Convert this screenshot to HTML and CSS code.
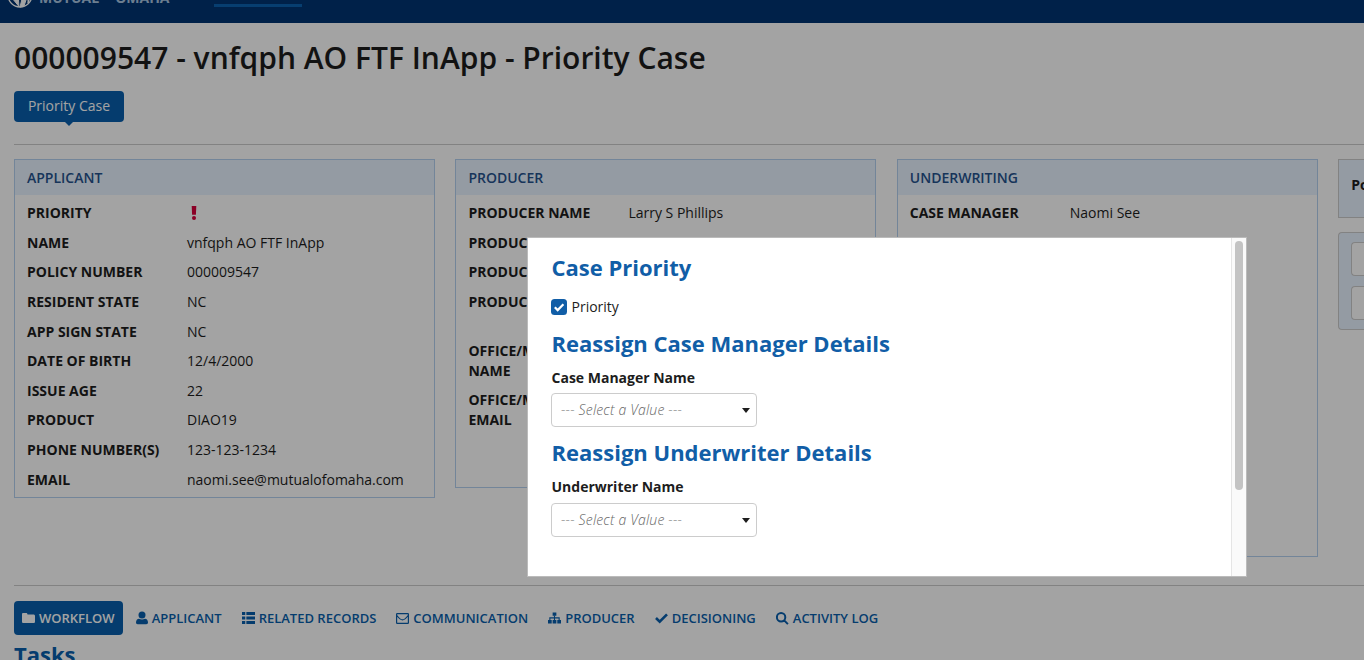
FILE: index.html
```html
<!DOCTYPE html>
<html lang="en">

<head>
    <meta charset="UTF-8">
    <meta name="viewport" content="width=device-width, initial-scale=1.0">
    <title>000009547 - Priority Case</title>
    <link rel="stylesheet" href="styles.css">
</head>

<body>
    <header class="topbar">
        <div class="brand">
            <svg class="brand-mark" width="26" height="26" viewBox="0 0 26 26">
                <circle cx="13" cy="13" r="12" fill="none" stroke="#fff" stroke-width="1.3"/>
                <path d="M5 16l7 8.500L11 13 8 12zM13 25l2-8 3-4 2 2-3 9zM21 14l3-1-3 8z" fill="#fff" stroke="#fff" stroke-width="1"/>
            </svg>
            <span class="brand-name">Mutual<small>of</small>Omaha</span>
        </div>
        <div class="active-tab"></div>
    </header>

    <main>
        <h1>000009547 - vnfqph AO FTF InApp - Priority Case</h1>
        <div class="milestone">Priority Case</div>

        <section class="summary">
            <article class="panel applicant">
                <h2>APPLICANT</h2>
                <dl>
                    <div><dt>PRIORITY</dt><dd><svg class="alert" width="14" height="14" viewBox="0 0 14 14"><path d="M4.700 0h4.600L8.900 8.800H5.100z"/><circle cx="7" cy="12" r="2"/></svg></dd></div>
                    <div><dt>NAME</dt><dd>vnfqph AO FTF InApp</dd></div>
                    <div><dt>POLICY NUMBER</dt><dd>000009547</dd></div>
                    <div><dt>RESIDENT STATE</dt><dd>NC</dd></div>
                    <div><dt>APP SIGN STATE</dt><dd>NC</dd></div>
                    <div><dt>DATE OF BIRTH</dt><dd>12/4/2000</dd></div>
                    <div><dt>ISSUE AGE</dt><dd>22</dd></div>
                    <div><dt>PRODUCT</dt><dd>DIAO19</dd></div>
                    <div><dt>PHONE NUMBER(S)</dt><dd>123-123-1234</dd></div>
                    <div><dt>EMAIL</dt><dd>naomi.see@mutualofomaha.com</dd></div>
                </dl>
            </article>

            <article class="panel producer">
                <h2>PRODUCER</h2>
                <dl>
                    <div><dt>PRODUCER NAME</dt><dd>Larry S Phillips</dd></div>
                    <div><dt>PRODUCER</dt></div>
                    <div><dt>PRODUCER</dt></div>
                    <div class="tall"><dt>PRODUCER</dt></div>
                    <div><dt>OFFICE/MGR<br>NAME</dt></div>
                    <div><dt>OFFICE/MGR<br>EMAIL</dt></div>
                </dl>
            </article>

            <article class="panel underwriting">
                <h2>UNDERWRITING</h2>
                <dl>
                    <div><dt>CASE MANAGER</dt><dd>Naomi See</dd></div>
                </dl>
            </article>

            <aside>
                <div class="policy-box">Po</div>
                <div class="action-box">
                    <div class="action"></div>
                    <div class="action"></div>
                </div>
            </aside>
        </section>

        <nav class="tabs">
            <a class="current"><svg width="13" height="12" viewBox="0 0 13 12"><path d="M0 2.2C0 1.5.5 1 1.2 1h3.1c.7 0 1.1.5 1.2 1.5h6c.8 0 1.5.6 1.5 1.4v5.8c0 .8-.6 1.3-1.4 1.3H1.4C.6 11 0 10.500 0 9.700z"/></svg>WORKFLOW</a>
            <a><svg width="12" height="14" viewBox="0 0 12 14"><circle cx="6" cy="4" r="3.500"/><path d="M0 11.500C0 9 1.300 7.700 3 7.700c1.900 1 4.100 1 6 0 1.700 0 3 1.300 3 3.800 0 1-.7 1.700-1.700 1.700H1.700C.7 13.200 0 12.500 0 11.500z"/></svg>APPLICANT</a>
            <a><svg width="13" height="12" viewBox="0 0 14 12" preserveAspectRatio="none"><path d="M0 0h3.500v3H0zM4.700 0H14v3H4.700zM0 4.500h3.500v3H0zM4.700 4.500H14v3H4.700zM0 9h3.500v3H0zM4.700 9H14v3H4.700z"/></svg>RELATED RECORDS</a>
            <a><svg width="13" height="11" viewBox="0 0 13 11"><path class="line" d="M1.200.6h10.600q.6 0 .6.600v8.600q0 .6-.6.600H1.200q-.6 0-.6-.6V1.200q0-.6.600-.6zM.8 2.500c1.600 2 4.400 4.400 5.700 4.400s4.100-2.400 5.700-4.400"/></svg>COMMUNICATION</a>
            <a><svg width="13" height="12" viewBox="0 0 14 12" preserveAspectRatio="none"><path d="M5 .5h4v3.300H5zM0 8h4v3.500H0zM5 8h4v3.500H5zM10 8h4v3.500h-4z"/><path class="line" d="M7 3.500V8M2 8V5.900h10V8"/></svg>PRODUCER</a>
            <a><svg width="13" height="12" viewBox="0 0 13 12"><path class="check" d="M1 6l3.700 3.700L12 2.300"/></svg>DECISIONING</a>
            <a><svg width="13" height="13" viewBox="0 0 13 13"><path class="lens" d="M9.300 5.300a4.200 4.200 0 1 1-8.400 0a4.200 4.200 0 1 1 8.400 0zM8.200 8.400l3.700 3.700"/></svg>ACTIVITY LOG</a>
        </nav>
        <h2 class="tasks">Tasks</h2>
    </main>

    <div class="overlay">
        <div class="dialog">
            <form>
                <h2>Case Priority</h2>
                <label class="priority">
                    <svg width="16" height="16" viewBox="0 0 16 16"><rect width="16" height="16" rx="3.500" fill="#115ea7"/><path d="M3.800 8.200l2.900 2.900 5.700-5.800" fill="none" stroke="#fff" stroke-width="2.200"/></svg>
                    Priority
                </label>
                <h2 class="manager-title">Reassign Case Manager Details</h2>
                <span class="field-label">Case Manager Name</span>
                <div class="select">--- Select a Value ---</div>
                <h2 class="underwriter-title">Reassign Underwriter Details</h2>
                <span class="field-label">Underwriter Name</span>
                <div class="select">--- Select a Value ---</div>
            </form>
            <div class="scrollbar"><div class="thumb"></div></div>
        </div>
    </div>
</body>

</html>
```
FILE: styles.css
```css
/* General Reset */
* {
    margin: 0;
    padding: 0;
    box-sizing: border-box;
}

body {
    height: 660px;
    overflow: hidden;
    font-family: "Open Sans", sans-serif;
    font-size: 14px;
    line-height: 1.4;
    color: #1d1d1d;
    background: #fff;
}

/* Top bar, scrolled mostly out of view */
.topbar {
    display: flex;
    height: 23px;
    overflow: hidden;
    background: #003472;
}

.brand {
    display: flex;
    align-items: flex-end;
    width: 207px;
    height: 8px;
    padding-left: 7px;
    color: #a9c6e2;
}

.brand-mark {
    flex: none;
}

.brand-name {
    margin: 0 0 0 6px;
    font-size: 14px;
    font-weight: 700;
    line-height: 20px;
    text-transform: uppercase;
}

.brand-name small {
    margin: 0 4px;
    font-size: 6px;
    vertical-align: 4px;
}

.active-tab {
    width: 88px;
    height: 3px;
    margin: 4px 0 0 7px;
    background: #0b62b0;
}

main {
    height: 637px;
    overflow: hidden;
    padding: 14px 0 0 14px;
}

h1 {
    height: 42px;
    font-size: 30px;
    font-weight: 600;
    line-height: 42px;
}

.milestone {
    position: relative;
    width: 110px;
    height: 31px;
    margin-top: 12px;
    border-radius: 4px;
    background: #085fad;
    color: #fff;
    line-height: 30px;
    text-align: center;
}

.milestone::after {
    content: "";
    position: absolute;
    top: 31px;
    left: 51px;
    border: 4px solid transparent;
    border-top-color: #085fad;
    border-bottom: 0;
}

/* Case summary */
.summary {
    display: flex;
    align-items: flex-start;
    gap: 20.4px;
    height: 442px;
    margin-top: 22px;
    padding-top: 14px;
    border-top: 1px solid #ccc;
    border-bottom: 1px solid #ccc;
}

.panel {
    flex: none;
    width: 421px;
    border: 1px solid #b5d1f0;
}

.applicant {
    height: 339px;
}

.producer {
    height: 329px;
}

.underwriting {
    height: 398px;
}

.panel h2 {
    height: 35px;
    padding-left: 12px;
    background: #e8f2ff;
    color: #25528e;
    font-size: 14px;
    font-weight: 600;
    line-height: 36px;
}

.panel dl {
    padding: 3.3px 12px 0;
}

.panel dl div {
    display: flex;
    padding: 5px 0;
}

.panel dl .tall {
    height: 49.2px;
}

dt {
    width: 160px;
    font-weight: 700;
}

.alert {
    display: block;
    margin-top: 3px;
    fill: #d9003c;
}

aside {
    flex: 1;
    font-weight: 700;
}

.policy-box {
    height: 59px;
    padding-left: 12px;
    border: 1px solid #ccc;
    border-right: 0;
    background: #e8f2ff;
    line-height: 50px;
    white-space: nowrap;
    overflow: hidden;
}

.action-box {
    display: flex;
    flex-direction: column;
    gap: 10px;
    height: 98px;
    margin-top: 14px;
    padding: 9px 0 9px 12px;
    border: 1px solid #ccc;
    border-right: 0;
    border-radius: 4px 0 0 4px;
    background: #e8f2ff;
}

.action {
    height: 34px;
    border: 1px solid #ccc;
    border-right: 0;
    border-radius: 4px 0 0 4px;
    background: #fff;
}

/* Tabs */
.tabs {
    display: flex;
    margin-top: 15px;
    color: #085fad;
    font-size: 13px;
    font-weight: 600;
}

.tabs a {
    display: flex;
    align-items: center;
    gap: 4px;
    height: 34px;
    margin-right: 4px;
    padding: 0 8px;
}

.tabs .current {
    margin-right: 5px;
    border-radius: 4px;
    background: #085fad;
    color: #fff;
}

.tabs svg {
    fill: currentColor;
}

.tabs .line,
.tabs .check,
.tabs .lens {
    fill: none;
    stroke: currentColor;
    stroke-width: 1.2;
}

.tabs .check {
    stroke-width: 2.6;
}

.tabs .lens {
    stroke-width: 2;
}

.tasks {
    margin-top: 4px;
    color: #085fad;
    font-size: 22px;
    line-height: 31px;
}

/* Dialog */
.overlay {
    position: absolute;
    top: 0;
    left: 0;
    width: 100%;
    height: 660px;
    padding: 237px 0 0 527px;
    background: rgba(0, 0, 0, 0.36);
}

.dialog {
    display: flex;
    justify-content: space-between;
    width: 720px;
    height: 340px;
    border: 1px solid #bbb;
    background: #fff;
}

form {
    padding: 14px 0 0 23px;
}

form h2 {
    padding-left: 0.5px;
    color: #115ea7;
    font-size: 22px;
    line-height: 31px;
}

.priority {
    display: flex;
    align-items: center;
    gap: 4.5px;
    height: 20px;
    margin-top: 14px;
}

.manager-title {
    margin-top: 11px;
}

.underwriter-title {
    margin-top: 10px;
}

.field-label {
    display: block;
    height: 20px;
    margin-top: 9px;
    padding-left: 0.5px;
    font-weight: 700;
}

.select {
    display: flex;
    align-items: center;
    justify-content: space-between;
    width: 206px;
    height: 34px;
    margin-top: 5px;
    padding: 0 6px 0 9px;
    border: 1px solid #ccc;
    border-radius: 4px;
    color: #666;
    font-style: italic;
    font-weight: 300;
    letter-spacing: 0.2px;
}

.underwriter-title + .field-label + .select {
    margin-top: 6px;
}

.select::after {
    content: "";
    border: 4.5px solid transparent;
    border-top: 5px solid #1d1d1d;
    border-bottom: 0;
}

.scrollbar {
    width: 15px;
    padding: 3px 0 0 3px;
    border-left: 1px solid #e5e5e5;
    background: #fafafa;
}

.thumb {
    width: 8px;
    height: 249px;
    border-radius: 4px;
    background: #c3c3c3;
}
```
